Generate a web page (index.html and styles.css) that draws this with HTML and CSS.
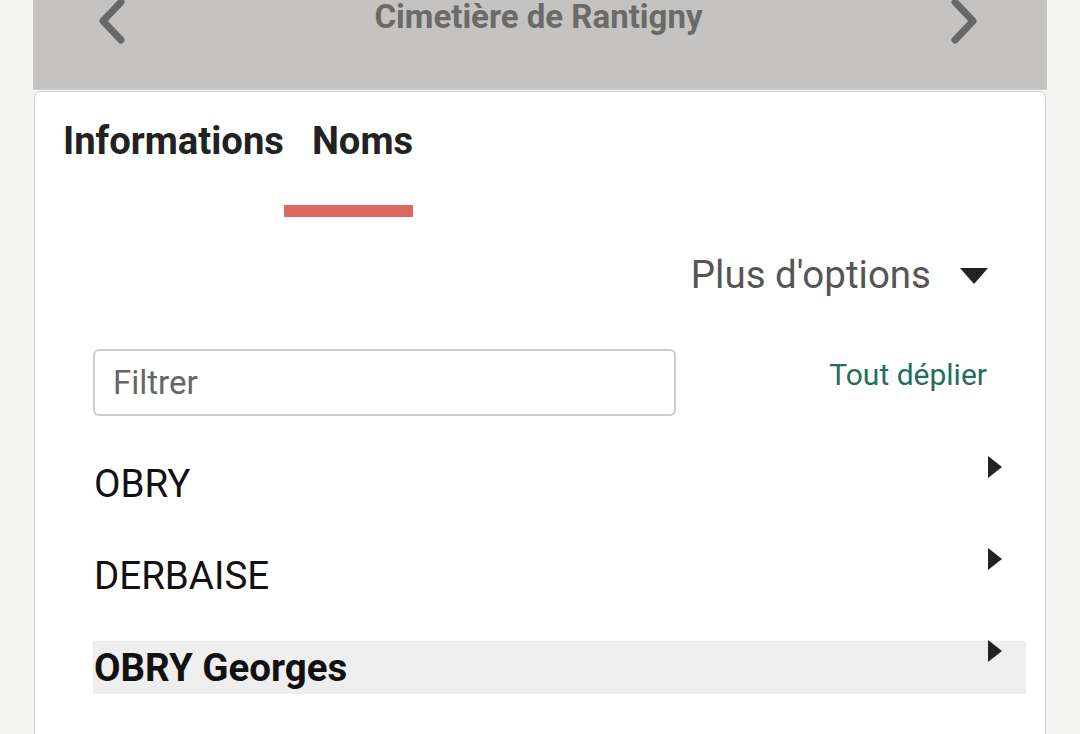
FILE: index.html
```html
<!DOCTYPE html>
<html lang="fr">
<head>
<meta charset="utf-8">
<link rel="stylesheet" href="styles.css">
</head>
<body>
<div class="page">
  <header class="topbar">
    <svg class="chev" width="28" height="44" viewBox="0 0 28 44"><path d="M23 2 L5 21 L23 40" fill="none" stroke="#686868" stroke-width="7" stroke-linecap="round" stroke-linejoin="round"/></svg>
    <h1 class="title">Cimetière de Rantigny</h1>
    <svg class="chev" width="28" height="44" viewBox="0 0 28 44"><path d="M4 2 L22 21 L4 40" fill="none" stroke="#686868" stroke-width="7" stroke-linecap="round" stroke-linejoin="round"/></svg>
  </header>
  <main class="card">
    <nav class="tabs">
      <div class="tab">Informations</div>
      <div class="tab active">Noms</div>
    </nav>
    <div class="options">
      <span class="options-label">Plus d'options</span>
      <svg class="caret-down" width="28" height="16" viewBox="0 0 28 16"><path d="M0 0 H28 L14 16 Z" fill="#222"/></svg>
    </div>
    <div class="filter-row">
      <input class="filter" type="text" placeholder="Filtrer">
      <a class="expand">Tout déplier</a>
    </div>
    <ul class="names">
      <li class="name"><span>OBRY</span><svg class="caret-right" width="14" height="22" viewBox="0 0 14 22"><path d="M0 0 L14 11 L0 22 Z" fill="#222"/></svg></li>
      <li class="name"><span>DERBAISE</span><svg class="caret-right" width="14" height="22" viewBox="0 0 14 22"><path d="M0 0 L14 11 L0 22 Z" fill="#222"/></svg></li>
      <li class="name selected"><span>OBRY Georges</span><svg class="caret-right" width="14" height="22" viewBox="0 0 14 22"><path d="M0 0 L14 11 L0 22 Z" fill="#222"/></svg></li>
    </ul>
  </main>
</div>
</body>
</html>
```
FILE: styles.css
```css
* { box-sizing: border-box; }
html, body { margin: 0; padding: 0; }
body {
  background: #f4f4f3;
  font-family: Roboto, "Liberation Sans", sans-serif;
  height: 734px;
  overflow: hidden;
}
.page {
  padding: 0 33px;
}
.topbar {
  height: 90px;
  background: #c4c3c1;
  border-bottom: 1px solid #d2d2d1;
  display: flex;
  align-items: flex-start;
  justify-content: space-between;
  padding: 0 68px 0 65px;
}
.chev { display: block; margin-top: 0; }
.title {
  margin: 0;
  font-size: 33px;
  line-height: 34px;
  font-weight: 700;
  color: #6a6a6a;
}
.card {
  background: #fff;
  border: 1px solid #cfcfcf;
  border-radius: 6px;
  margin: 1px 1px 0;
  height: 680px;
}
.tabs {
  display: flex;
  padding-top: 26px;
}
.tab {
  padding: 0 0 41px 28px;
  font-size: 38.2px;
  line-height: 46px;
  font-weight: 700;
  color: #222;
  border-bottom: 12px solid transparent;
}
.tab.active {
  border-bottom-color: #e06661;
}
.options {
  display: flex;
  justify-content: flex-end;
  align-items: center;
  margin-top: 36px;
  padding-right: 57px;
  gap: 29px;
}
.options-label {
  font-size: 38.5px;
  line-height: 44px;
  color: #555;
}
.caret-down { display: block; margin-top: 2px; }
.filter-row {
  display: flex;
  justify-content: space-between;
  align-items: flex-start;
  margin-top: 52px;
  padding: 0 58px;
}
.filter {
  width: 583px;
  height: 67px;
  border: 2px solid #cccccc;
  border-radius: 6px;
  padding: 0 18px;
  font-family: inherit;
  font-size: 33px;
  color: #333;
  outline: none;
}
.filter::placeholder { color: #666; }
.expand {
  margin-top: 8px;
  font-size: 30px;
  line-height: 36px;
  color: #1f6f5c;
}
.names {
  list-style: none;
  margin: 41px 19px 0 58px;
  padding: 0;
  display: flex;
  flex-direction: column;
  gap: 39px;
}
.name {
  height: 53px;
  display: flex;
  justify-content: space-between;
  align-items: flex-start;
  padding: 0 24px 0 1px;
  font-size: 38.5px;
  line-height: 53px;
  color: #111;
}
.name.selected {
  background: #eeeeee;
  font-weight: 700;
}
.caret-right { display: block; margin-top: -1px; }
```
